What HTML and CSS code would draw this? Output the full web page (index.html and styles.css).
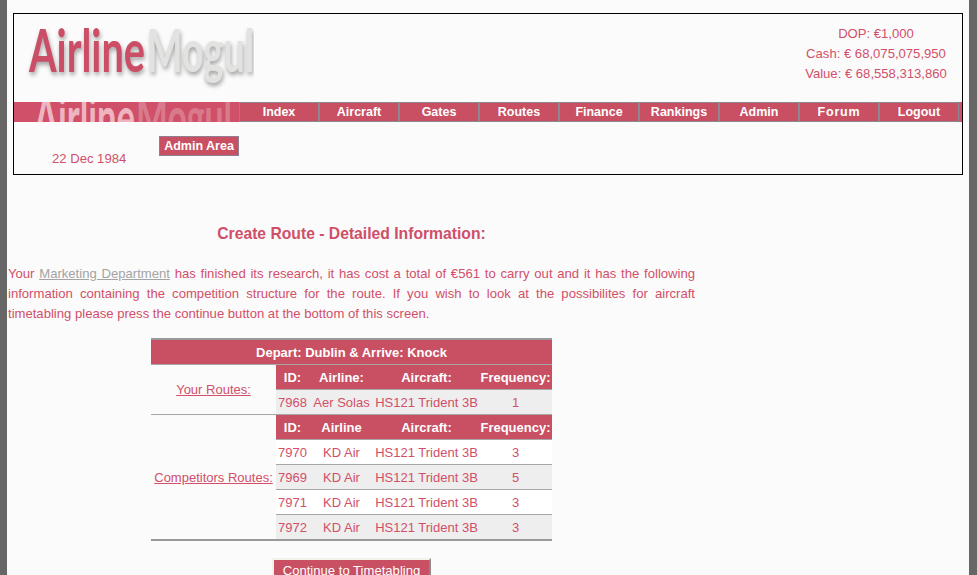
FILE: index.html
```html
<!DOCTYPE html>
<html lang="en">
<head>
<meta charset="utf-8">
<title>Airline Mogul - Create Route</title>
<link rel="stylesheet" href="styles.css">
</head>
<body>
<div class="page">
  <header class="masthead">
    <div class="top">
      <svg class="logo" width="240" height="88" viewBox="0 0 240 88" role="img" aria-label="AirlineMogul">
        <text class="logo-a" x="15" y="58" textLength="116" lengthAdjust="spacingAndGlyphs">Airline</text>
        <text class="logo-b" x="133" y="58" textLength="107" lengthAdjust="spacingAndGlyphs">Mogul</text>
      </svg>
      <div class="stats">
        <div>DOP: €1,000</div>
        <div>Cash: € 68,075,075,950</div>
        <div>Value: € 68,558,313,860</div>
      </div>
    </div>
    <nav class="nav">
      <svg class="nav-mark" width="225" height="20" viewBox="0 0 225 20" aria-hidden="true">
        <text class="mark-a" x="20" y="37" textLength="101" lengthAdjust="spacingAndGlyphs">Airline</text>
        <text class="mark-b" x="122" y="37" textLength="96" lengthAdjust="spacingAndGlyphs">Mogul</text>
      </svg>
      <a class="nav-item" href="#">Index</a>
      <a class="nav-item" href="#">Aircraft</a>
      <a class="nav-item" href="#">Gates</a>
      <a class="nav-item" href="#">Routes</a>
      <a class="nav-item" href="#">Finance</a>
      <a class="nav-item" href="#">Rankings</a>
      <a class="nav-item" href="#">Admin</a>
      <a class="nav-item nav-wide" href="#">Forum</a>
      <a class="nav-item" href="#">Logout</a>
    </nav>
    <div class="sub">
      <div class="date">22 Dec 1984</div>
      <a class="admin" href="#">Admin Area</a>
    </div>
  </header>

  <main class="content">
    <h1 class="title">Create Route - Detailed Information:</h1>
    <p class="intro">Your <a class="grey-link" href="#">Marketing Department</a> has finished its research, it has cost a total of €561 to carry out and it has the following information containing the competition structure for the route. If you wish to look at the possibilites for aircraft timetabling please press the continue button at the bottom of this screen.</p>

    <table class="routes">
      <colgroup>
        <col class="c-label"><col class="c-id"><col class="c-air"><col class="c-craft"><col class="c-freq">
      </colgroup>
      <tr><th class="banner" colspan="5">Depart: Dublin &amp; Arrive: Knock</th></tr>
      <tr>
        <td class="label sep" rowspan="2"><a href="#">Your Routes:</a></td>
        <th>ID:</th><th>Airline:</th><th>Aircraft:</th><th>Frequency:</th>
      </tr>
      <tr class="alt sep"><td class="left">7968</td><td>Aer Solas</td><td>HS121 Trident 3B</td><td>1</td></tr>
      <tr>
        <td class="label" rowspan="5"><a href="#">Competitors Routes:</a></td>
        <th>ID:</th><th>Airline</th><th>Aircraft:</th><th>Frequency:</th>
      </tr>
      <tr class="plain"><td class="left">7970</td><td>KD Air</td><td>HS121 Trident 3B</td><td>3</td></tr>
      <tr class="alt"><td class="left">7969</td><td>KD Air</td><td>HS121 Trident 3B</td><td>5</td></tr>
      <tr class="plain"><td class="left">7971</td><td>KD Air</td><td>HS121 Trident 3B</td><td>3</td></tr>
      <tr class="alt"><td class="left">7972</td><td>KD Air</td><td>HS121 Trident 3B</td><td>3</td></tr>
    </table>

    <div class="actions"><button class="continue" type="button">Continue to Timetabling</button></div>
  </main>
</div>
</body>
</html>
```

FILE: styles.css
```css
html {
  background: #666;
  height: 100%;
  overflow: hidden;
}
body {
  margin: 0 8px 0 7px;
  min-height: 100%;
  background: #fbfbfb;
  color: #d24f69;
  font-family: "Liberation Sans", Arial, sans-serif;
  font-size: 13.1px;
  line-height: 20px;
}
.page {
  padding: 13px 6px 0 1px;
}
.masthead {
  margin-left: 5px;
  border: 1px solid #000;
  height: 160px;
}
.top {
  display: flex;
  justify-content: space-between;
  height: 88px;
}
.logo {
  display: block;
}
.logo text, .nav-mark text {
  font-family: "Lato", sans-serif;
  font-weight: 700;
  font-size: 60px;
}
.logo-a {
  fill: #cc4e66;
  filter: drop-shadow(1px 3px 2px rgba(0, 0, 0, .35));
}
.logo-b {
  fill: #e2e2e0;
  filter: drop-shadow(1px 3px 2px rgba(0, 0, 0, .35));
}
.stats {
  width: 172px;
  padding: 10px 0 0;
  text-align: center;
}
.nav {
  position: relative;
  display: flex;
  justify-content: flex-start;
  height: 20px;
  padding-left: 225px;
  background: #cf5068;
  overflow: hidden;
}
.nav-mark {
  position: absolute;
  left: 0;
  top: 0;
}
.mark-a {
  fill: #eeb4c0;
}
.mark-b {
  fill: #d97a8c;
}
.nav-item {
  box-sizing: border-box;
  width: 80px;
  height: 20px;
  border: 1px solid #8f8790;
  background: #c94f63;
  color: #fff;
  font-size: 12.5px;
  font-weight: 700;
  line-height: 19px;
  text-align: center;
  text-decoration: none;
}
.nav-wide {
  letter-spacing: .8px;
}
.sub {
  display: flex;
  align-items: flex-start;
  padding-top: 14px;
}
.date {
  width: 145px;
  padding: 13px 0 0 38px;
  box-sizing: border-box;
}
.admin {
  box-sizing: border-box;
  width: 80px;
  height: 20px;
  border: 1px solid #8f7f8f;
  background: #c94f63;
  color: #fff;
  font-size: 12.5px;
  font-weight: 700;
  line-height: 19px;
  text-align: center;
  text-decoration: none;
  white-space: nowrap;
}
.content {
  width: 687px;
}
.title {
  margin: 0;
  padding-top: 48px;
  font-size: 15.7px;
  font-weight: 700;
  line-height: 21px;
  text-align: center;
  color: #cf4f68;
}
.intro {
  margin: 20px 0 0;
  text-align: justify;
}
.grey-link {
  color: #a3a3a3;
}
.routes {
  width: 401px;
  margin: 14px auto 0;
  border-collapse: collapse;
  table-layout: fixed;
  border-bottom: 2px solid #999;
  font-size: 13px;
}
.c-label { width: 125px; }
.c-id { width: 33px; }
.c-air { width: 65px; }
.c-craft { width: 105px; }
.c-freq { width: 73px; }
.routes tr {
  height: 25px;
}
.routes th, .routes td {
  padding: 1px 0 0;
  height: 23px;
  border-bottom: 1px solid #a6a6a6;
  text-align: center;
  white-space: nowrap;
}
.routes th {
  background: #c94f63;
  color: #fff;
  font-weight: 700;
}
.routes .banner {
  border-top: 2px solid #999;
}
.routes .label {
  background: #fbfbfb;
  border-bottom: 0;
}
.routes .label.sep {
  border-bottom: 1px solid #a6a6a6;
}
.routes .label a {
  color: #d24f69;
}
.routes .left {
  text-align: left;
  padding-left: 2px;
}
.plain td {
  background: #fff;
}
.alt td {
  background: #eee;
}
.actions {
  margin-top: 17px;
  text-align: center;
}
.continue {
  box-sizing: border-box;
  width: 159px;
  height: 25px;
  padding: 0;
  border: 2px solid;
  border-color: #f2f2ea #8a8a8a #8a8a8a #f2f2ea;
  background: #c94f63;
  color: #fff;
  font-family: "Liberation Sans", Arial, sans-serif;
  font-size: 13.1px;
}
```
